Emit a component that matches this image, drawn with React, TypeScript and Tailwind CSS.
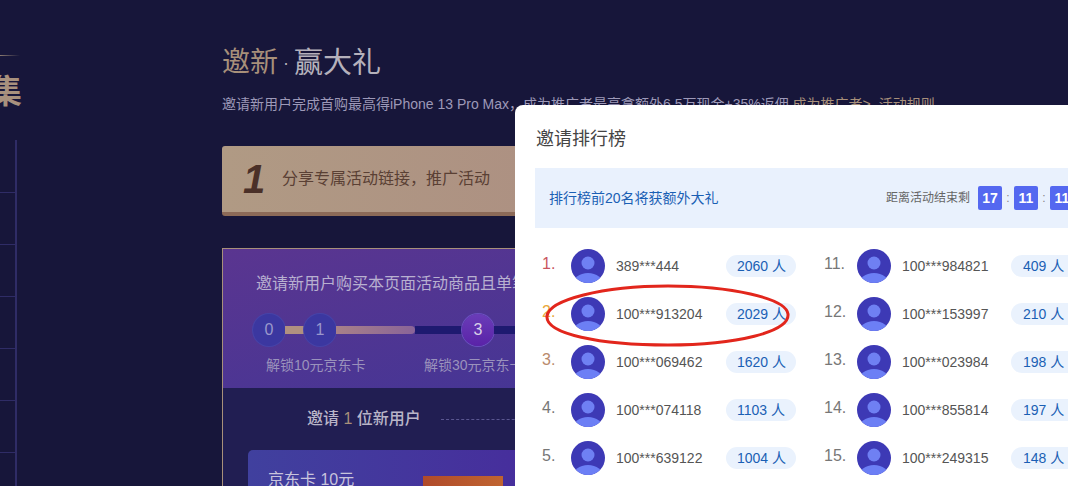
import React from "react";

const font = { fontFamily: '"Liberation Sans", "Noto Sans CJK SC", sans-serif' };

const leftRows = [
  { rank: "1.", name: "389***444", count: "2060 人", color: "text-[#c9555f]" },
  { rank: "2.", name: "100***913204", count: "2029 人", color: "text-[#e8a93c]" },
  { rank: "3.", name: "100***069462", count: "1620 人", color: "text-[#b98a6c]" },
  { rank: "4.", name: "100***074118", count: "1103 人", color: "text-[#777777]" },
  { rank: "5.", name: "100***639122", count: "1004 人", color: "text-[#777777]" },
];

const rightRows = [
  { rank: "11.", name: "100***984821", count: "409 人", color: "text-[#777777]" },
  { rank: "12.", name: "100***153997", count: "210 人", color: "text-[#777777]" },
  { rank: "13.", name: "100***023984", count: "198 人", color: "text-[#777777]" },
  { rank: "14.", name: "100***855814", count: "197 人", color: "text-[#777777]" },
  { rank: "15.", name: "100***249315", count: "148 人", color: "text-[#777777]" },
];

const Avatar = () => (
  <svg width="34" height="34" viewBox="0 0 34 34" className="shrink-0">
    <defs>
      <clipPath id="avatar-clip">
        <circle cx="17" cy="17" r="17" />
      </clipPath>
    </defs>
    <circle cx="17" cy="17" r="17" fill="#3d39b5" />
    <circle cx="17" cy="14" r="6.5" fill="#6f80f3" />
    <ellipse cx="17" cy="36" rx="15.5" ry="12" fill="#6c7ff5" clipPath="url(#avatar-clip)" />
  </svg>
);

type RowProps = { rank: string; name: string; count: string; color: string; rankW: string; nameW: string; pillPl: string };

const Row = ({ rank, name, count, color, rankW, nameW, pillPl }: RowProps) => (
  <div className="flex h-[48px] items-center">
    <div className={`-mt-[5px] text-[16px] ${rankW} ${color}`}>{rank}</div>
    <Avatar />
    <div className={`pl-[11px] text-[14px] text-[#555555] whitespace-nowrap ${nameW}`}>{name}</div>
    <div className={`flex h-[22px] w-[70px] shrink-0 items-center rounded-full bg-[#eaf2fd] text-[14px] text-[#1a5fb4] whitespace-nowrap ${pillPl}`}>
      {count}
    </div>
  </div>
);

const StepCircle = ({ n, active }: { n: string; active?: boolean }) => (
  <div
    className={`flex h-[32px] w-[32px] shrink-0 items-center justify-center rounded-full text-[16px] ${
      active
        ? "bg-gradient-to-b from-[#6a3cb8] to-[#5a22a8] text-[#d8cfe8] shadow-[0_0_0_1px_#6b4fc0]"
        : "bg-[#3b37a0] text-[#9a97cc] shadow-[0_0_0_1px_#4643a8]"
    }`}
  >
    {n}
  </div>
);

export default function App() {
  return (
    <div style={font} className="relative flex h-[486px] w-[1068px] overflow-hidden bg-[#17163a]">
      {/* left nav, mostly scrolled off */}
      <div className="w-[222px] shrink-0 pt-[55px]">
        <div className="h-px w-[20px] bg-gradient-to-r from-[#8a7a70] to-transparent" />
        <div className="-ml-[11px] mt-[18px] text-[33px] font-bold leading-[36px] text-[#a8917e]">集</div>
        <div className="mt-[30px] h-[346px] w-[17px] border-r-2 border-[#2f2c66]">
          <div className="h-[53px] border-b border-[#2f2c66]" />
          <div className="h-[52px] border-b border-[#2f2c66]" />
          <div className="h-[52px] border-b border-[#2f2c66]" />
          <div className="h-[52px] border-b border-[#2f2c66]" />
          <div className="h-[52px] border-b border-[#2f2c66]" />
          <div className="h-[52px] border-b border-[#2f2c66]" />
        </div>
      </div>

      {/* main column */}
      <div className="w-[846px] shrink-0 pt-[42px]">
        <div className="mt-[1px] flex h-[40px] items-center whitespace-nowrap text-[28px] leading-[40px]">
          <span className="text-[#a8907a]">邀新</span>
          <span className="mx-[5px] text-[18px] text-[#b5b1bb]">·</span>
          <span className="text-[29px] text-[#b5b1bb]">赢大礼</span>
        </div>
        <div className="mt-[11px] h-[20px] whitespace-nowrap text-[14px] leading-[20px] text-[#9d99b8]">
          邀请新用户完成首购最高得iPhone 13 Pro Max，成为推广者最高拿额外6.5万现金+35%返佣
          <span className="text-[#a8907a]"> 成为推广者&gt;</span>
          <span className="ml-[8px] text-[#a8907a]">活动规则</span>
        </div>

        <div className="mt-[32px] flex h-[70px] w-[600px] items-center rounded-[3px] border-b-4 border-[#8c6a58] bg-gradient-to-r from-[#b09a84] to-[#aa8880] pl-[21px]">
          <span className="w-[39px] text-[40px] font-bold italic leading-none text-[#4a3028]">1</span>
          <span className="text-[16px] text-[#5a4034]">分享专属活动链接，推广活动</span>
        </div>

        <div className="mt-[32px] w-[600px] border border-[#a8907a] bg-[#211e52]">
          <div className="h-[139px] bg-gradient-to-br from-[#5a3590] to-[#3f3596] pl-[33px] pr-[20px] pt-[25px]">
            <div className="whitespace-nowrap text-[16px] leading-[20px] text-[#b8b0d0]">
              邀请新用户购买本页面活动商品且单笔实付满足条件
            </div>
            <div className="-ml-[3px] mt-[20px] flex items-center">
              <StepCircle n="0" />
              <div className="h-[8px] w-[19px] bg-[#b09080]" />
              <StepCircle n="1" />
              <div className="h-[8px] w-[79px] rounded-r-full bg-gradient-to-r from-[#a88088] to-[#8a6498]" />
              <div className="h-[8px] w-[47px] bg-[#1e1a70]" />
              <StepCircle n="3" active />
              <div className="h-[8px] w-[60px] bg-[#1e1a70]" />
            </div>
            <div className="mt-[10px] flex text-[14px] leading-[18px] text-[#9a92bc]">
              <span className="w-[168px] whitespace-nowrap pl-[10px]">解锁10元京东卡</span>
              <span className="whitespace-nowrap">解锁30元京东卡</span>
            </div>
          </div>
          <div className="flex h-[62px] items-center pl-[84px]">
            <span className="whitespace-nowrap text-[16px] font-medium text-[#b9b5c8]">
              邀请 <span className="text-[#a8907a]">1</span> 位新用户
            </span>
            <div className="ml-[20px] h-0 w-[200px] border-t border-dashed border-[#5a5690]" />
          </div>
          <div className="ml-[25px] flex h-[80px] w-[500px] rounded-t-[5px] bg-gradient-to-r from-[#40409e] to-[#4a1a9a] pl-[20px] pt-[19px]">
            <span className="w-[155px] text-[16px] leading-[22px] text-[#c8c4dc]">京东卡 10元</span>
            <div className="mt-[7px] h-[60px] w-[80px] bg-gradient-to-r from-[#b04a2a] to-[#c06430]" />
          </div>
        </div>
      </div>

      {/* ranking dialog */}
      <div className="absolute left-[515px] top-[105px] h-[400px] w-[600px] rounded-[8px] bg-white pl-[20px] pt-[22px]">
        <div className="pl-[1px] text-[18px] leading-[24px] text-[#444444]">邀请排行榜</div>
        <div className="mt-[17px] flex h-[60px] items-center bg-[#e9f1fd] pl-[14px]">
          <span className="w-[337px] text-[14px] text-[#1a5fb4]">排行榜前20名将获额外大礼</span>
          <span className="w-[92px] whitespace-nowrap text-[12px] text-[#666666]">距离活动结束剩</span>
          <div className="flex items-center text-[14px] font-bold text-white">
            <span className="flex h-[24px] w-[24px] items-center justify-center rounded-[2px] bg-[#5468f0]">17</span>
            <span className="w-[12px] text-center text-[12px] font-normal text-[#888888]">:</span>
            <span className="flex h-[24px] w-[24px] items-center justify-center rounded-[2px] bg-[#5468f0]">11</span>
            <span className="w-[12px] text-center text-[12px] font-normal text-[#888888]">:</span>
            <span className="flex h-[24px] w-[24px] items-center justify-center rounded-[2px] bg-[#5468f0]">11</span>
          </div>
        </div>
        <div className="mt-[14px] flex pl-[7px]">
          <div className="w-[282px] shrink-0">
            {leftRows.map((r) => (
              <Row key={r.rank} {...r} rankW="w-[29px]" nameW="w-[121px]" pillPl="pl-[11px]" />
            ))}
          </div>
          <div className="w-[300px] shrink-0">
            {rightRows.map((r) => (
              <Row key={r.rank} {...r} rankW="w-[33px]" nameW="w-[120px]" pillPl="pl-[12px]" />
            ))}
          </div>
        </div>
      </div>

      {/* hand-drawn red annotation */}
      <svg className="absolute left-[540px] top-[280px]" width="256" height="72" viewBox="0 0 256 72" fill="none">
        <path
          d="M7 36C9 20 62 6 128 6C190 6 246 18 248 34C250 52 196 65 128 65C60 65 5 54 7 36Z"
          stroke="#e2261c"
          strokeWidth="3"
        />
      </svg>
    </div>
  );
}
